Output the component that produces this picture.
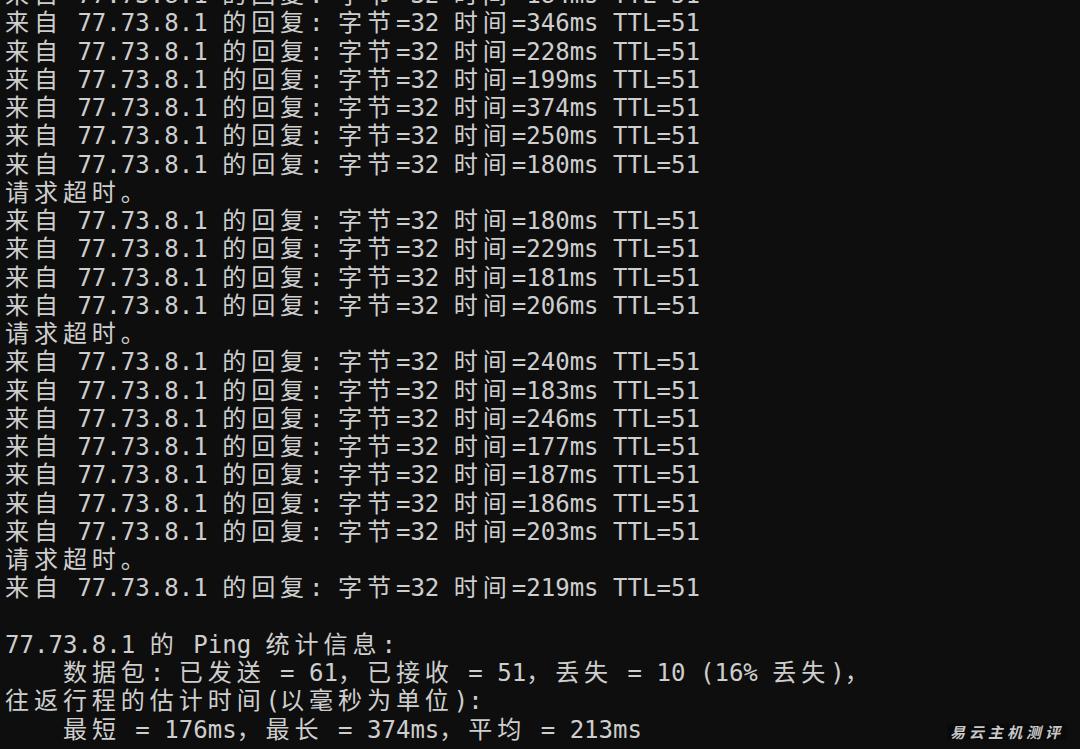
import React from "react";

const reply = (ms: number) => `来自 77.73.8.1 的回复: 字节=32 时间=${ms}ms TTL=51`;
const timeout = "请求超时。";

const lines: string[] = [
  reply(184),
  reply(346),
  reply(228),
  reply(199),
  reply(374),
  reply(250),
  reply(180),
  timeout,
  reply(180),
  reply(229),
  reply(181),
  reply(206),
  timeout,
  reply(240),
  reply(183),
  reply(246),
  reply(177),
  reply(187),
  reply(186),
  reply(203),
  timeout,
  reply(219),
  "",
  "77.73.8.1 的 Ping 统计信息:",
  "    数据包: 已发送 = 61，已接收 = 51，丢失 = 10 (16% 丢失)，",
  "往返行程的估计时间(以毫秒为单位):",
  "    最短 = 176ms，最长 = 374ms，平均 = 213ms",
];

// wide chars take two terminal cells
const isWide = (c: string) => (c.codePointAt(0) ?? 0) >= 0x2e80;

const TermLine = ({ text }: { text: string }) => {
  const parts: React.ReactNode[] = [];
  let run = "";
  Array.from(text).forEach((c, i) => {
    if (isWide(c)) {
      if (run) {
        parts.push(run);
        run = "";
      }
      parts.push(
        <span key={i} className="inline-block w-[2ch]">
          {c}
        </span>
      );
    } else {
      run += c;
    }
  });
  if (run) parts.push(run);
  return <div className="h-[28.25px] whitespace-pre">{parts}</div>;
};

const App = () => {
  return (
    <div className="relative w-full h-[749px] overflow-hidden bg-[#0e0e0e] text-[#cecece]">
      {/*terminal output*/}
      <div className="-mt-[19px] pl-[5px] font-['DejaVu_Sans_Mono','Noto_Sans_CJK_SC',monospace] text-[24.05px] leading-[28.25px]">
        {lines.map((line, index) => (
          <TermLine text={line} key={index} />
        ))}
      </div>
      {/*watermark*/}
      <div className="absolute right-[13px] bottom-[9px] px-[3px] bg-[#0a0a0a] font-['Noto_Sans_CJK_SC',sans-serif] text-[15px] leading-[16px] font-bold italic tracking-[4px] text-[#c8c8c8]">
        易云主机测评
      </div>
    </div>
  );
};

export default App;
